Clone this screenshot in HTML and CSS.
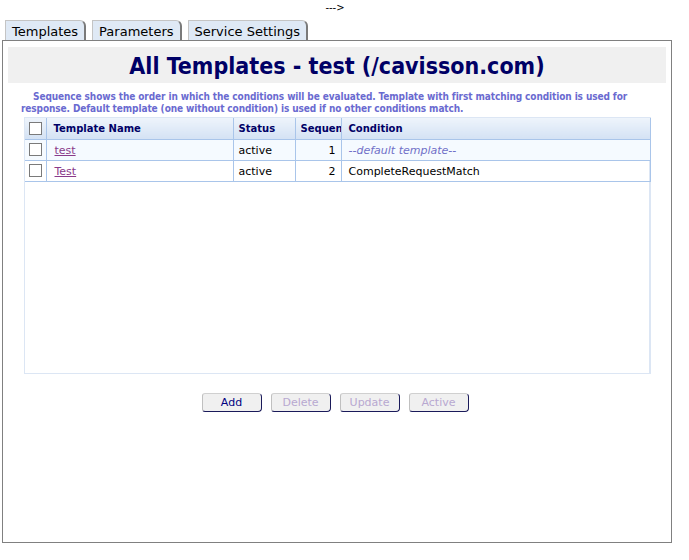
FILE: index.html
```html
<!DOCTYPE html>
<html>
<head>
<meta charset="utf-8">
<link rel="stylesheet" href="styles.css">
</head>
<body>
<div class="page">
  <div class="arrow">---&gt;</div>
  <div class="tabs">
    <div class="tab">Templates</div>
    <div class="tab">Parameters</div>
    <div class="tab">Service Settings</div>
  </div>
  <div class="panel">
    <div class="title">All Templates - test (/cavisson.com)</div>
    <p class="note">Sequence shows the order in which the conditions will be evaluated. Template with first matching condition is used for response. Default template (one without condition) is used if no other conditions match.</p>
    <div class="grid-box">
      <table class="grid">
        <thead>
          <tr>
            <th class="c-chk"><span class="chk"></span></th>
            <th class="c-name">Template Name</th>
            <th class="c-status">Status</th>
            <th class="c-seq"><span class="clip">Sequence</span></th>
            <th class="c-cond">Condition</th>
          </tr>
        </thead>
        <tbody>
          <tr class="alt">
            <td class="c-chk"><span class="chk"></span></td>
            <td class="c-name"><a class="link">test</a></td>
            <td class="c-status">active</td>
            <td class="c-seq num">1</td>
            <td class="c-cond default">--default template--</td>
          </tr>
          <tr>
            <td class="c-chk"><span class="chk"></span></td>
            <td class="c-name"><a class="link">Test</a></td>
            <td class="c-status">active</td>
            <td class="c-seq num">2</td>
            <td class="c-cond">CompleteRequestMatch</td>
          </tr>
        </tbody>
      </table>
    </div>
    <div class="buttons">
      <button class="btn">Add</button>
      <button class="btn disabled">Delete</button>
      <button class="btn disabled">Update</button>
      <button class="btn disabled">Active</button>
    </div>
  </div>
</div>
</body>
</html>
```
FILE: styles.css
```css
html, body {
  margin: 0;
  padding: 0;
  background: #ffffff;
}
body {
  font-family: "DejaVu Sans", Verdana, sans-serif;
  font-size: 11px;
  color: #000000;
}
.page {
  width: 670px;
  margin-left: 2px;
}
.arrow {
  height: 20px;
  line-height: 16px;
  text-align: center;
  font-size: 10px;
  padding-right: 4px;
  box-sizing: border-box;
}
.tabs {
  display: flex;
  gap: 6px;
  padding-left: 3px;
  height: 20px;
  align-items: flex-end;
}
.tab {
  height: 20px;
  box-sizing: border-box;
  background: #dfe9f5;
  border: 1px solid #c4c4c4;
  border-right: 2px solid #7a7a7a;
  border-bottom: none;
  border-top-right-radius: 6px;
  padding: 0 6px;
  font-size: 13px;
  line-height: 21px;
  color: #000000;
}
.panel {
  border: 1px solid #808080;
  height: 503px;
  box-sizing: border-box;
  padding: 6px 5px 0 5px;
}
.title {
  background: #f0f0f0;
  height: 36px;
  line-height: 39px;
  text-align: center;
  font-family: "DejaVu Sans Condensed", "DejaVu Sans", sans-serif;
  font-weight: bold;
  font-size: 23px;
  color: #000066;
}
.note {
  margin: 8px 12px 0 13px;
  font-family: "DejaVu Sans Condensed", "DejaVu Sans", sans-serif;
  font-weight: bold;
  font-size: 10px;
  line-height: 12px;
  letter-spacing: -0.1px;
  color: #6a6ad0;
  text-indent: 12px;
}
.grid-box {
  margin: 2px 15px 0 16px;
  height: 257px;
  box-sizing: border-box;
  border: 1px solid #dce6f4;
  border-right: 2px solid #dce6f4;
}
.grid {
  border-collapse: collapse;
  width: 626px;
  table-layout: fixed;
}
.grid th, .grid td {
  height: 21px;
  box-sizing: border-box;
  padding: 1px 5px 0 5px;
  border: 1px solid #a9c5ea;
  white-space: nowrap;
  overflow: hidden;
  text-align: left;
}
.grid thead th {
  border-top: none;
  background: linear-gradient(#eef4fb, #d4e2f4);
  color: #000066;
  font-weight: bold;
  font-size: 10px;
  border-bottom: 1px solid #a9c5ea;
}
.grid thead th.c-chk { border-left: none; }
.grid td.c-chk { border-left: none; }
.grid .c-cond { border-right: 1px solid #a9c5ea; padding-left: 7px; }
.c-chk { width: 21px; padding: 0 !important; text-align: center !important; }
.c-name { width: 187px; }
.grid .c-name { padding-left: 7px; }
.c-status { width: 62px; }
.c-seq { width: 46px; }
.grid thead th.c-seq { padding-right: 0; }
.clip { display: block; overflow: hidden; }
.num { text-align: right !important; }
tr.alt td { background: #f5faff; }
.chk {
  display: inline-block;
  width: 13px;
  height: 13px;
  box-sizing: border-box;
  border: 1px solid #7a7a7a;
  background: #ffffff;
  vertical-align: middle;
}
.link {
  color: #8a3a8a;
  text-decoration: underline;
  padding-left: 1px;
}
.default {
  color: #7070c8;
  font-style: italic;
}
.buttons {
  display: flex;
  justify-content: center;
  gap: 9px;
  margin-top: 19px;
  padding-right: 4px;
}
.btn {
  height: 19px;
  width: 60px;
  box-sizing: border-box;
  background: #f0f0f0;
  border: 1px solid;
  border-color: #d0d0d0 #1a1a5a #1a1a5a #c0c0c0;
  border-radius: 3px 4px 4px 3px;
  font-family: "DejaVu Sans", sans-serif;
  font-size: 11px;
  color: #000080;
  padding: 0;
  line-height: 17px;
}
.btn.disabled {
  color: #b8a8d0;
}
```
